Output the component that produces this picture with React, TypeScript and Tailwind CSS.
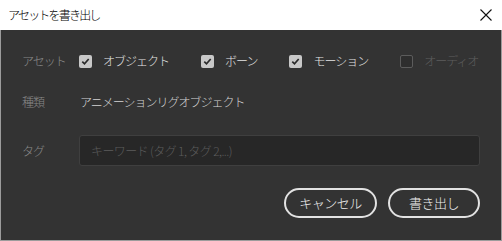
const font = { fontFamily: '"Noto Sans CJK JP", "Noto Sans", sans-serif' };

function Check({ checked, disabled }: { checked?: boolean; disabled?: boolean }) {
  if (disabled) {
    return <span className="block h-[13px] w-[13px] rounded-[2px] border border-[#5c5c5c] bg-[#2e2e2e]" />;
  }
  return (
    <span className="flex h-[13px] w-[13px] items-center justify-center rounded-[2px] bg-[#c8c8c8]">
      {checked && (
        <svg width="9" height="9" viewBox="0 0 9 9">
          <path d="M1.3 4.6 L3.5 6.8 L7.7 2" fill="none" stroke="#2a2a2a" strokeWidth="1.7" />
        </svg>
      )}
    </span>
  );
}

const assets = [
  { label: "オブジェクト", checked: true },
  { label: "ボーン", checked: true },
  { label: "モーション", checked: true },
  { label: "オーディオ", disabled: true },
];

export default function App() {
  return (
    <div className="flex h-[241px] w-[502px] flex-col font-light" style={font}>
      <div className="flex h-[30px] items-center justify-between bg-white pl-[8px] pr-[9px]">
        <span className="text-[12px] tracking-[-1.8px] text-black">アセットを書き出し</span>
        <svg width="14" height="14" viewBox="0 0 14 14">
          <path d="M1.5 1.5 L12.5 12.5 M12.5 1.5 L1.5 12.5" stroke="#111" strokeWidth="1.1" />
        </svg>
      </div>
      <div className="flex flex-1 flex-col border-x border-b border-[#9c9c9c] bg-[#333333] pl-[21px] pr-[21px] text-[12px] tracking-[-1px]">
        <div className="mt-[19px] flex h-[24px] items-center">
          <span className="w-[57px] text-[#8a8a8a]">アセット</span>
          <div className="flex items-center gap-[32px]">
            {assets.map((a) => (
              <div key={a.label} className="flex items-center gap-[11px]">
                <Check checked={a.checked} disabled={a.disabled} />
                <span className={a.disabled ? "text-[#5e5e5e]" : "text-[#e4e4e4]"}>{a.label}</span>
              </div>
            ))}
          </div>
        </div>
        <div className="mt-[17px] flex h-[24px] items-center">
          <span className="w-[58px] text-[#8a8a8a]">種類</span>
          <span className="text-[#d4d4d4]">アニメーションリグオブジェクト</span>
        </div>
        <div className="mt-[21px] flex h-[31px] items-center">
          <span className="w-[57px] text-[#8a8a8a]">タグ</span>
          <div className="flex h-[31px] flex-1 items-center rounded-[3px] border border-[#3f3f3f] bg-[#272727] pl-[11px] tracking-[-0.6px] text-[#5c5c5c]">
            キーワード (タグ 1, タグ 2,...)
          </div>
        </div>
        <div className="mt-[22px] flex justify-end gap-[11px] text-[13px] tracking-[-0.5px]">
          <button className="h-[30px] w-[93px] rounded-full border-2 border-[#e2e2e2] text-[#eeeeee]">キャンセル</button>
          <button className="h-[30px] w-[92px] rounded-full border-2 border-[#e2e2e2] text-[#eeeeee]">書き出し</button>
        </div>
      </div>
    </div>
  );
}
